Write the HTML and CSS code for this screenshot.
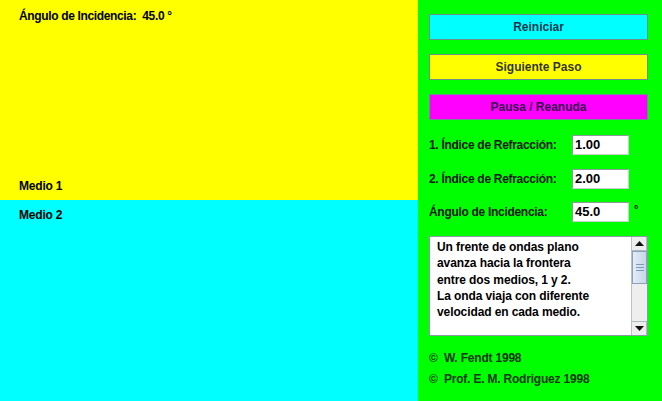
FILE: index.html
```html
<!DOCTYPE html>
<html>
<head>
<meta charset="utf-8">
<link rel="stylesheet" href="styles.css">
</head>
<body>
<div class="app">
  <div class="canvas">
    <div class="medium m1">
      <div class="angle">Ángulo de Incidencia:&nbsp; 45.0 °</div>
      <div class="mlabel">Medio 1</div>
    </div>
    <div class="medium m2">
      <div class="mlabel">Medio 2</div>
    </div>
  </div>
  <div class="panel">
    <div class="btn b-cyan">Reiniciar</div>
    <div class="btn b-yellow">Siguiente Paso</div>
    <div class="btn b-magenta">Pausa / Reanuda</div>
    <div class="row r1"><span class="lbl">1. Índice de Refracción:</span><span class="field">1.00</span></div>
    <div class="row r2"><span class="lbl">2. Índice de Refracción:</span><span class="field">2.00</span></div>
    <div class="row r3"><span class="lbl">Ángulo de Incidencia:</span><span class="field">45.0</span><span class="deg">°</span></div>
    <div class="textarea">
      <div class="text">Un frente de ondas plano<br>avanza hacia la frontera<br>entre dos medios, 1 y 2.<br>La onda viaja con diferente<br>velocidad en cada medio.</div>
      <div class="scroll">
        <div class="sb-btn up"><svg width="9" height="5" viewBox="0 0 9 5"><path d="M0 5 L4.5 0 L9 5 Z" fill="#111"/></svg></div>
        <div class="thumb"><span></span><span></span><span></span></div>
        <div class="track"></div>
        <div class="sb-btn down"><svg width="9" height="5" viewBox="0 0 9 5"><path d="M0 0 L4.5 5 L9 0 Z" fill="#111"/></svg></div>
      </div>
    </div>
    <div class="copy">©&nbsp; W. Fendt 1998</div>
    <div class="copy">©&nbsp; Prof. E. M. Rodriguez 1998</div>
  </div>
</div>
</body>
</html>
```

FILE: styles.css
```css
html, body {
  margin: 0;
  padding: 0;
  width: 662px;
  height: 401px;
  overflow: hidden;
}
body {
  font-family: "Liberation Sans", Arial, sans-serif;
  font-weight: bold;
  font-size: 12px;
  letter-spacing: -0.2px;
  color: #000;
}
.app {
  display: flex;
  width: 662px;
  height: 401px;
}
.canvas {
  width: 418px;
  display: flex;
  flex-direction: column;
}
.medium {
  display: flex;
  flex-direction: column;
  padding-left: 19px;
}
.m1 {
  background: #ffff00;
  height: 200px;
  justify-content: space-between;
  box-sizing: border-box;
  padding-top: 9px;
  padding-bottom: 7px;
}
.m2 {
  background: #00ffff;
  flex: 1;
  padding-top: 8px;
}
.angle {
  line-height: 14px;
  letter-spacing: -0.35px;
}
.mlabel {
  line-height: 14px;
}
.panel {
  flex: 1;
  background: #00ff00;
  padding: 14px 0 0 11px;
  display: flex;
  flex-direction: column;
}
.btn {
  width: 219px;
  height: 26px;
  box-sizing: border-box;
  border: 1px solid #6f8f8f;
  display: flex;
  align-items: center;
  justify-content: center;
  margin-bottom: 14px;
  color: rgba(10, 10, 40, 0.85);
  letter-spacing: 0;
}
.b-cyan { background: #00ffff; }
.b-yellow { background: #ffff00; }
.b-magenta { background: #ff00ff; margin-bottom: 15px; }
.row {
  display: flex;
  align-items: center;
  height: 20px;
}
.r1, .r2 { margin-bottom: 14px; }
.r3 { margin-bottom: 14px; margin-top: -1px; }
.lbl {
  width: 143px;
  color: #101810;
  letter-spacing: -0.3px;
}
.field {
  width: 57px;
  height: 20px;
  box-sizing: border-box;
  background: #fff;
  border: 1px solid #8a9a9a;
  border-right-color: #c8d0d0;
  border-bottom-color: #c8d0d0;
  padding-left: 2px;
  line-height: 18px;
  font-size: 13px;
  letter-spacing: 0;
}
.deg {
  margin-left: 5px;
  margin-top: -6px;
  font-size: 11px;
}
.textarea {
  width: 219px;
  height: 100px;
  box-sizing: border-box;
  border: 1px solid #8a9aa8;
  background: #fff;
  display: flex;
}
.text {
  flex: 1;
  padding: 2px 0 0 7px;
  line-height: 16.3px;
  letter-spacing: -0.1px;
}
.scroll {
  width: 15px;
  display: flex;
  flex-direction: column;
  background: #eeeeee;
  border-left: 1px solid #b8c0c8;
}
.sb-btn {
  height: 14px;
  box-sizing: border-box;
  display: flex;
  align-items: center;
  justify-content: center;
  background: #eeeeee;
  border: 1px solid #b0b8c0;
  border-left: none;
}
.sb-btn.up { border-top: none; }
.sb-btn.down { border-bottom: none; }
.thumb {
  height: 33px;
  box-sizing: border-box;
  background: linear-gradient(to right, #e4ecf6, #c6d6ea);
  border: 1px solid #8ca2bc;
  display: flex;
  flex-direction: column;
  align-items: center;
  justify-content: center;
  gap: 2px;
}
.thumb span {
  width: 8px;
  height: 1px;
  background: #7f9ab8;
}
.track { flex: 1; }
.copy {
  color: #123812;
  line-height: 21px;
  margin-left: 0;
}
.textarea + .copy { margin-top: 12px; }
```
